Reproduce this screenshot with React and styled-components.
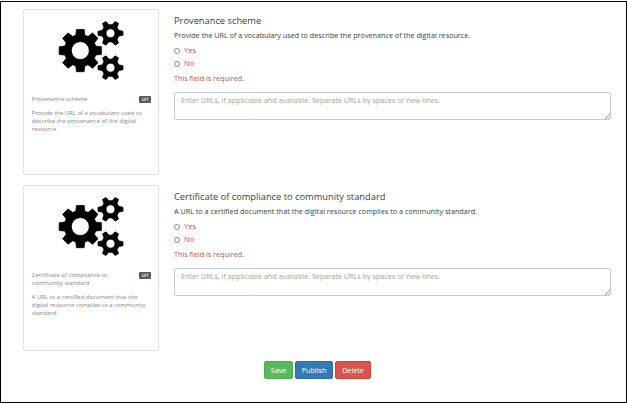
import React from "react";
import styled, { createGlobalStyle } from "styled-components";

const GlobalStyle = createGlobalStyle`
  * { box-sizing: border-box; }
  body {
    margin: 0;
    background: #fff;
    font-family: "Open Sans", "Noto Sans", sans-serif;
    overflow: hidden;
  }
`;

const Page = styled.main`
  width: 627px;
  height: 402px;
  margin-top: 1px;
  border: 1px solid #000;
  padding: 8px 15px 0 22px;
  background: #fff;
`;

const Row = styled.section`
  display: grid;
  grid-template-columns: 136px 437px;
  column-gap: 15px;
  height: 166px;
  margin-bottom: ${(p) => (p.$last ? 9 : 10)}px;
`;

const Card = styled.article`
  height: 166px;
  border: 1px solid #e0e0e0;
  border-radius: 2px;
  padding: 9px 6px 0 7.6px;
  color: #858585;
  font-size: 5.95px;
  line-height: 8px;
  margin-top: -1px;
`;

const Gears = styled.svg`
  display: block;
  width: 70px;
  height: 62px;
  margin: 0 0 0 26.4px;
`;

const CardHeader = styled.div`
  display: flex;
  justify-content: space-between;
  align-items: flex-start;
  margin-top: 14px;
`;

const CardTitle = styled.span`
  width: 90px;
`;

const Badge = styled.span`
  width: 12px;
  height: 7px;
  margin: 1px 1px 0 0;
  border-radius: 1px;
  background: #5a5a5a;
  color: #e4e4e4;
  font-size: 5px;
  font-weight: 600;
  line-height: 6px;
  text-align: center;
`;

const CardText = styled.p`
  margin: 6px 0 0;
  white-space: pre-line;
`;

const Field = styled.div`
  padding-top: 4px;
`;

const Title = styled.h2`
  margin: 0;
  color: #404040;
  font-size: 9.3px;
  font-weight: 400;
  line-height: 13px;
  white-space: nowrap;
`;

const Description = styled.p`
  margin: 3px 0 4px;
  color: #404040;
  font-size: 7.23px;
  line-height: 10px;
  white-space: nowrap;
`;

const Option = styled.label`
  display: flex;
  align-items: center;
  height: 13px;
  color: #ad5553;
  font-size: 7.5px;
  line-height: 13px;
`;

const Radio = styled.input`
  appearance: none;
  width: 6px;
  height: 6px;
  margin: 0 4px 0 0;
  border: 1px solid #888;
  border-radius: 50%;
  background: #fff;
`;

const ErrorText = styled.p`
  margin: 3px 0 9px;
  color: #ad5553;
  font-size: 7.23px;
  line-height: 10px;
`;

const InputFrame = styled.div`
  display: grid;
  height: 28px;
`;

const UrlInput = styled.textarea`
  grid-area: 1 / 1;
  width: 437px;
  height: 28px;
  border: 1px solid #ccc;
  border-radius: 2px;
  padding: 2px 6px;
  background: #fff;
  font-family: inherit;
  font-size: 7.23px;
  line-height: 10px;
  resize: none;
  overflow: hidden;
  outline: none;
  &::placeholder { color: #a2a2a2; opacity: 1; }
`;

const Grip = styled.svg`
  grid-area: 1 / 1;
  justify-self: end;
  align-self: end;
  width: 5px;
  height: 5px;
  margin: 0 1px 1px 0;
`;

const Actions = styled.div`
  display: flex;
  gap: 2px;
  margin-left: 241px;
`;

const Button = styled.button`
  width: ${(p) => p.$width}px;
  height: 18px;
  padding: 0;
  border: 1px solid ${(p) => p.$edge};
  border-radius: 2px;
  background: ${(p) => p.$fill};
  color: #fff;
  font-family: inherit;
  font-size: 7.2px;
  line-height: 15px;
`;

// Outline of a gear with trapezoidal teeth around (cx, cy) and a round hole.
function gearPath({ cx, cy, teeth, outer, body, tip, base, hole }) {
  const points = [];
  for (let i = 0; i < teeth; i++) {
    const a = (i * 2 * Math.PI) / teeth;
    const at = (r, t) =>
      `${(cx + r * Math.cos(a) - t * Math.sin(a)).toFixed(2)} ${(cy + r * Math.sin(a) + t * Math.cos(a)).toFixed(2)}`;
    points.push(at(body, -base), at(outer, -tip), at(outer, tip), at(body, base));
  }
  return `M${points.join("L")}ZM${cx - hole} ${cy}a${hole} ${hole} 0 1 0 ${2 * hole} 0a${hole} ${hole} 0 1 0 ${-2 * hole} 0Z`;
}

const small = { teeth: 6, outer: 12.5, body: 8.3, tip: 2, base: 2.8, hole: 4.5 };
const gears = [
  { cx: 22.3, cy: 31.6, teeth: 8, outer: 21.1, body: 15.4, tip: 3.8, base: 4.5, hole: 9 },
  { ...small, cx: 52.5, cy: 14.3 },
  { ...small, cx: 52.5, cy: 48.7 },
];

const fields = [
  {
    title: "Provenance scheme",
    text: "Provide the URL of a vocabulary used to describe the provenance of the digital resource.",
    cardText: "Provide the URL of a vocabulary used to\ndescribe the provenance of the digital\nresource.",
  },
  {
    title: "Certificate of compliance to community standard",
    text: "A URL to a certified document that the digital resource complies to a community standard.",
    cardText: "A URL to a certified document that the\ndigital resource complies to a community\nstandard.",
  },
];

function MetadataRow({ field, name, last }) {
  return (
    <Row $last={last}>
      <Card>
        <Gears viewBox="0 0 70 62" aria-hidden="true">
          {gears.map((g) => (
            <path key={g.cy} d={gearPath(g)} fillRule="evenodd" stroke="#000" strokeWidth="0.8" strokeLinejoin="round" />
          ))}
        </Gears>
        <CardHeader>
          <CardTitle>{field.title}</CardTitle>
          <Badge>url</Badge>
        </CardHeader>
        <CardText>{field.cardText}</CardText>
      </Card>
      <Field>
        <Title>{field.title}</Title>
        <Description>{field.text}</Description>
        <Option><Radio type="radio" name={name} />Yes</Option>
        <Option><Radio type="radio" name={name} />No</Option>
        <ErrorText>This field is required.</ErrorText>
        <InputFrame>
          <UrlInput placeholder="Enter URLs, if applicable and available. Separate URLs by spaces or new lines." />
          <Grip viewBox="0 0 5 5" aria-hidden="true">
            <path d="M0 5L5 0M2.7 5L5 2.7" stroke="#888" strokeWidth="0.8" />
          </Grip>
        </InputFrame>
      </Field>
    </Row>
  );
}

export default function App() {
  return (
    <>
      <GlobalStyle />
      <Page>
        {fields.map((f, i) => (
          <MetadataRow key={f.title} field={f} name={`field-${i}`} last={i === fields.length - 1} />
        ))}
        <Actions>
          <Button $width={29} $fill="#5cb85c" $edge="#4cae4c">Save</Button>
          <Button $width={38} $fill="#337ab7" $edge="#2e6da4">Publish</Button>
          <Button $width={36} $fill="#d9534f" $edge="#d43f3a">Delete</Button>
        </Actions>
      </Page>
    </>
  );
}
